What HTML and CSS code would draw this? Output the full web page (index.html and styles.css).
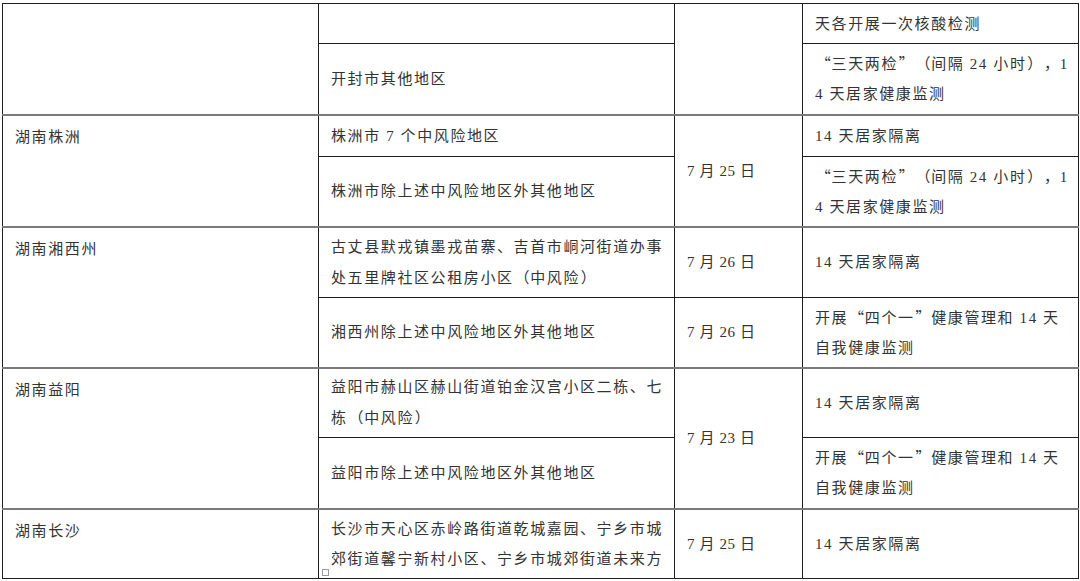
FILE: index.html
```html
<!DOCTYPE html>
<html lang="zh-CN">
<head>
<meta charset="utf-8">
<link rel="stylesheet" href="styles.css">
</head>
<body>
<div class="page">
<table class="grid">
  <colgroup>
    <col class="c1"><col class="c2"><col class="c3"><col class="c4">
  </colgroup>
  <tr class="r40">
    <td class="prov" rowspan="2"></td>
    <td class="area"></td>
    <td class="date" rowspan="2"></td>
    <td class="meas">天各开展一次核酸检测</td>
  </tr>
  <tr class="r71">
    <td class="area">开封市其他地区</td>
    <td class="meas"><span class="fw">“</span>三天两检<span class="fw">”</span><span class="fw">（</span>间隔 24 小时<span class="fw">）</span><span class="fw">，</span>1<br>4 天居家健康监测</td>
  </tr>

  <tr class="r42 grp">
    <td class="prov" rowspan="2">湖南株洲</td>
    <td class="area">株洲市 7 个中风险地区</td>
    <td class="date" rowspan="2">7 月 25 日</td>
    <td class="meas">14 天居家隔离</td>
  </tr>
  <tr class="r70">
    <td class="area">株洲市除上述中风险地区外其他地区</td>
    <td class="meas"><span class="fw">“</span>三天两检<span class="fw">”</span><span class="fw">（</span>间隔 24 小时<span class="fw">）</span><span class="fw">，</span>1<br>4 天居家健康监测</td>
  </tr>

  <tr class="r71 grp">
    <td class="prov" rowspan="2">湖南湘西州</td>
    <td class="area">古丈县默戎镇墨戎苗寨、吉首市峒河街道办事<br>处五里牌社区公租房小区<span class="fw">（</span>中风险<span class="fw">）</span></td>
    <td class="date">7 月 26 日</td>
    <td class="meas">14 天居家隔离</td>
  </tr>
  <tr class="r70">
    <td class="area">湘西州除上述中风险地区外其他地区</td>
    <td class="date">7 月 26 日</td>
    <td class="meas">开展<span class="fw">“</span>四个一<span class="fw">”</span>健康管理和 14 天<br>自我健康监测</td>
  </tr>

  <tr class="r70 grp">
    <td class="prov" rowspan="2">湖南益阳</td>
    <td class="area">益阳市赫山区赫山街道铂金汉宫小区二栋、七<br>栋<span class="fw">（</span>中风险<span class="fw">）</span></td>
    <td class="date" rowspan="2">7 月 23 日</td>
    <td class="meas">14 天居家隔离</td>
  </tr>
  <tr class="r71">
    <td class="area">益阳市除上述中风险地区外其他地区</td>
    <td class="meas">开展<span class="fw">“</span>四个一<span class="fw">”</span>健康管理和 14 天<br>自我健康监测</td>
  </tr>

  <tr class="r70 grp">
    <td class="prov">湖南长沙</td>
    <td class="area">长沙市天心区赤岭路街道乾城嘉园、宁乡市城<br>郊街道馨宁新村小区、宁乡市城郊街道未来方</td>
    <td class="date">7 月 25 日</td>
    <td class="meas">14 天居家隔离</td>
  </tr>
</table>
<span class="handle"></span>
</div>
</body>
</html>
```

FILE: styles.css
```css
html, body {
  margin: 0;
  padding: 0;
  background: #ffffff;
}

.page {
  position: relative;
  padding: 3px 0 0 2px;
  width: 1076px;
}

.grid {
  border-collapse: collapse;
  table-layout: fixed;
  width: 1076px;
  font-family: "Liberation Serif", "Noto Sans CJK SC", serif;
  font-size: 15px;
  letter-spacing: 1.6px;
  color: #333333;
  border: 1.5px solid #1e1e1e;
}

.c1 { width: 316px; }
.c2 { width: 356px; }
.c3 { width: 128px; }
.c4 { width: 276px; }

.grid td {
  border: 1px solid #1e1e1e;
  padding: 0 0 0 12px;
  line-height: 30px;
  white-space: nowrap;
  overflow: hidden;
  vertical-align: middle;
}

.grid td.prov {
  vertical-align: top;
  padding-top: 6px;
}

.grid td.date {
  letter-spacing: 0.6px;
}

.fw {
  font-family: "Noto Sans CJK SC", sans-serif;
  font-feature-settings: "fwid" 1;
  display: inline-block;
  width: 16.6px;
  text-align: center;
  letter-spacing: 0;
}

.grid tr.grp td {
  border-top: 2px solid #7a7a7a;
}

.r40 { height: 40px; }
.r42 { height: 42px; }
.r70 { height: 70px; }
.r71 { height: 71px; }

.handle {
  position: absolute;
  left: 322px;
  top: 569px;
  width: 5px;
  height: 5px;
  border: 1px solid #9a9a9a;
  background: #ffffff;
}
```
